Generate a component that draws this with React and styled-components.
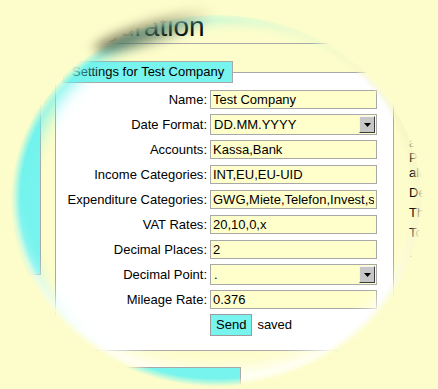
import React from 'react'
import styled, { createGlobalStyle } from 'styled-components'

const GlobalStyle = createGlobalStyle`
  html, body {
    margin: 0;
    padding: 0;
    background: #fdfdcb;
  }
`

const Page = styled.div`
  position: relative;
  width: 438px;
  height: 389px;
  overflow: hidden;
  background: #fdfdcb;
  font-family: "Liberation Sans", Arial, sans-serif;
  font-size: 13px;
  color: #000;
`

const Header = styled.div`
  margin: 0 43px 0 30px;
  padding: 11px 0 0 8px;
  border-bottom: 1px solid #a8a8a8;
`

const Title = styled.h1`
  margin: 0;
  font-size: 28px;
  line-height: 32px;
  font-weight: normal;
`

const Columns = styled.div`
  display: flex;
  align-items: flex-start;
  margin-top: 17px;
`

const Nav = styled.div`
  flex: none;
  width: 41px;
  height: 214px;
  box-sizing: border-box;
  background: #78f4ee;
  border-right: 1px solid #a8a8a8;
  border-bottom: 1px solid #a8a8a8;
`

const Settings = styled.fieldset`
  flex: none;
  box-sizing: border-box;
  width: 339px;
  min-inline-size: 0;
  margin: 0 0 0 14px;
  padding: 4px 15px 13px 0;
  border: 1px solid #a8a8a8;
  background: #fff;
`

const Legend = styled.legend`
  margin-left: 7px;
  padding: 2px 8px;
  line-height: 16px;
  background: #78f4ee;
  border: 1px solid #a8a8a8;
`

const Form = styled.div`
  display: grid;
  grid-template-columns: 151px 167px;
  grid-auto-rows: 25px;
  column-gap: 3px;
  align-items: center;
`

const Label = styled.label`
  text-align: right;
  white-space: nowrap;
`

const Field = styled.input`
  box-sizing: border-box;
  width: 100%;
  height: 19px;
  margin: 0;
  padding: 0 2px;
  border: 1px solid #a8a8a8;
  background: #ffffcc;
  font: 13px "Liberation Sans", Arial, sans-serif;
  color: #000;
  outline: none;
`

const SelectBox = styled.div`
  display: flex;
  align-items: center;
  justify-content: space-between;
  box-sizing: border-box;
  height: 21px;
  padding-left: 3px;
  border: 1px solid #a8a8a8;
  background: #ffffcc;
`

const Arrow = styled.span`
  display: flex;
  align-items: center;
  justify-content: center;
  box-sizing: border-box;
  width: 16px;
  height: 17px;
  margin-right: 1px;
  background: #c6c6c6;
  border: 1px solid;
  border-color: #f4f4f4 #3c3c3c #3c3c3c #f4f4f4;
`

const Actions = styled.div`
  display: flex;
  align-items: center;
  gap: 5px;
`

const Send = styled.button`
  height: 22px;
  margin: 0;
  padding: 0 5px;
  border: 1px solid #9c9c9c;
  background: #78f4ee;
  font: 13px "Liberation Sans", Arial, sans-serif;
  color: #000;
`

const Side = styled.div`
  flex: none;
  margin: 74px 0 0 15px;
  white-space: nowrap;
  line-height: 15px;
`

const Note = styled.p`
  margin: 0 0 5px;
`

const Footer = styled.div`
  position: relative;
  z-index: 2;
  box-sizing: border-box;
  width: 201px;
  height: 40px;
  margin: 16px 0 0 40px;
  background: #78f4ee;
  border-top: 1px solid #a8a8a8;
  border-right: 1px solid #a8a8a8;
`

const Rim = styled.div`
  position: absolute;
  left: 13px;
  top: 15px;
  width: 408px;
  height: 370px;
  z-index: 1;
  border-radius: 50%;
  pointer-events: none;
  box-shadow:
    inset 0 -20px 16px -6px rgba(255, 255, 255, 0.95),
    inset 18px 10px 16px -8px rgba(110, 242, 236, 0.8),
    inset -8px 0 10px -7px rgba(90, 90, 50, 0.2);
`

const Veil = styled.div`
  position: absolute;
  inset: 0;
  z-index: 3;
  pointer-events: none;
  background: radial-gradient(204px 185px at 217px 200px, rgba(253, 253, 203, 0) 96.5%, #fdfdcb 101%);
`

const Shade = styled.div`
  position: absolute;
  left: 92px;
  top: 21px;
  width: 126px;
  height: 20px;
  z-index: 4;
  border-radius: 50%;
  pointer-events: none;
  background: linear-gradient(90deg, rgba(55, 55, 35, 0.75), rgba(55, 55, 35, 0.45) 55%, rgba(55, 55, 35, 0));
  filter: blur(6px);
  transform: rotate(-17deg);
`

const fields = [
  { label: 'Name', value: 'Test Company' },
  { label: 'Date Format', value: 'DD.MM.YYYY', select: true },
  { label: 'Accounts', value: 'Kassa,Bank' },
  { label: 'Income Categories', value: 'INT,EU,EU-UID' },
  { label: 'Expenditure Categories', value: 'GWG,Miete,Telefon,Invest,sonstige' },
  { label: 'VAT Rates', value: '20,10,0,x' },
  { label: 'Decimal Places', value: '2' },
  { label: 'Decimal Point', value: '.', select: true },
  { label: 'Mileage Rate', value: '0.376' }
]

const notes = [
  ['a', 'Pay', 'all'],
  ['Del'],
  ['The'],
  ['To'],
  ['.']
]

const Select = ({ value }) => (
  <SelectBox>
    <span>{value}</span>
    <Arrow>
      <svg width='7' height='4' viewBox='0 0 7 4'>
        <polygon points='0,0 7,0 3.5,4' fill='#000' />
      </svg>
    </Arrow>
  </SelectBox>
)

const App = () => (
  <Page>
    <GlobalStyle />
    <Header>
      <Title>Configuration</Title>
    </Header>
    <Columns>
      <Nav />
      <Settings>
        <Legend>Settings for Test Company</Legend>
        <Form>
          {
            fields.map(({ label, value, select }) => (
              <React.Fragment key={label}>
                <Label>{label}:</Label>
                {
                  select
                    ? <Select value={value} />
                    : <Field defaultValue={value} readOnly />
                }
              </React.Fragment>
            ))
          }
          <span />
          <Actions>
            <Send type='button'>Send</Send>
            <span>saved</span>
          </Actions>
        </Form>
      </Settings>
      <Side>
        {
          notes.map((lines, key) => (
            <Note key={key}>
              {lines.map((line, i) => <div key={i}>{line}</div>)}
            </Note>
          ))
        }
      </Side>
    </Columns>
    <Footer />
    <Rim />
    <Veil />
    <Shade />
  </Page>
)

export default App
